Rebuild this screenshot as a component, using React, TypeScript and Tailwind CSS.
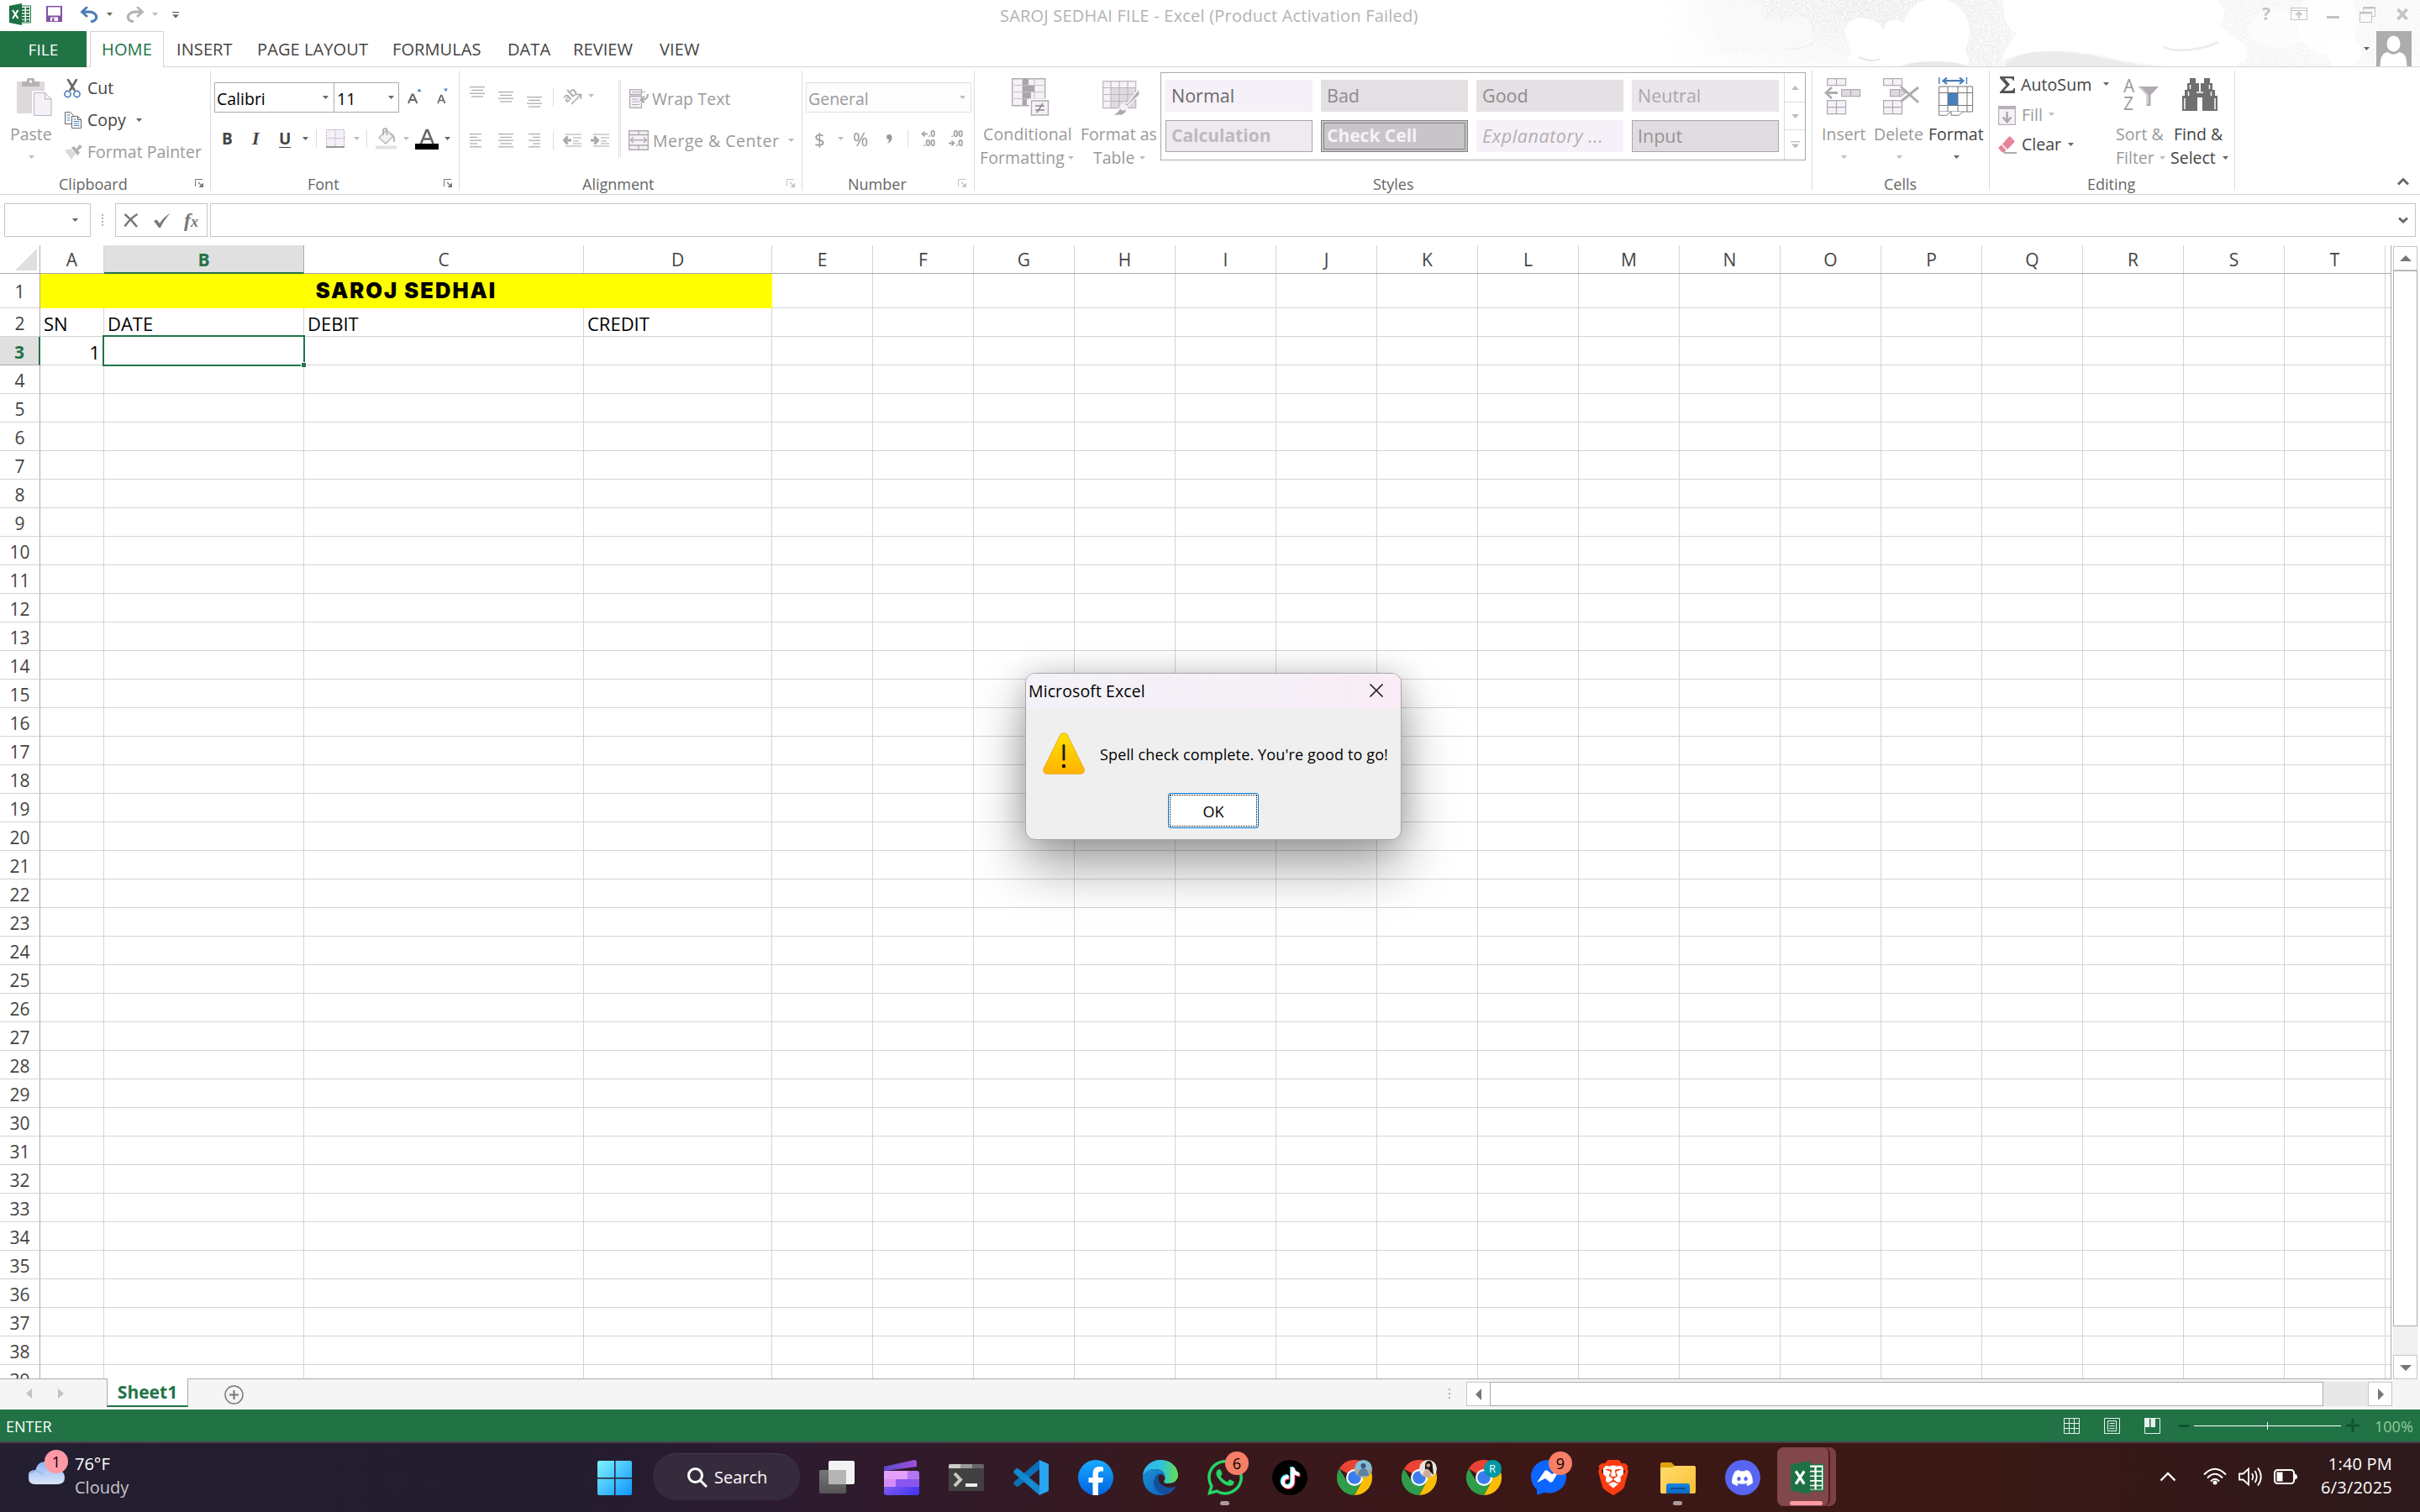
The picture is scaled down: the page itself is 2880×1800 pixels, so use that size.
import React from 'react';
import { FaWhatsapp, FaTiktok, FaDiscord } from 'react-icons/fa6';
import { SiBrave } from 'react-icons/si';

const COLUMNS = [
  { id: 'A', w: 'w-[76px]' },
  { id: 'B', w: 'w-[238px]' },
  { id: 'C', w: 'w-[333px]' },
  { id: 'D', w: 'w-[224px]' },
  ...'EFGHIJKLMNOPQRST'.split('').map((id) => ({ id, w: 'w-[120px]' })),
];
const ROWS = Array.from({ length: 39 }, (_, i) => i + 1);
const CELLS: Record<string, string> = { A2: 'SN', B2: 'DATE', C2: 'DEBIT', D2: 'CREDIT', A3: '1' };

function Caret({ className = '', dim = false }: { className?: string; dim?: boolean }) {
  return (
    <svg className={`h-[4px] w-[7px] shrink-0 ${className}`} viewBox="0 0 7 4">
      <path d="M0 0h7L3.5 4z" fill={dim ? '#bdbdbd' : '#666'} />
    </svg>
  );
}

function Launcher({ dim = false }: { dim?: boolean }) {
  const c = dim ? '#c4c4c4' : '#777';
  return (
    <svg className="h-[11px] w-[11px] shrink-0" viewBox="0 0 11 11">
      <path d="M.5 9V.5H9" fill="none" stroke={c} />
      <path d="M4 4l4 4" stroke={c} strokeWidth="1.3" />
      <path d="M10 4.5V10H4.5z" fill={c} />
    </svg>
  );
}

function Group({ width, label, labelPad, launcher, launcherGap = '', children }: {
  width: string; label: string; labelPad: string; launcher?: 'on' | 'dim'; launcherGap?: string; children: React.ReactNode;
}) {
  return (
    <section className={`flex h-[151px] shrink-0 ${width}`}>
      <div className="flex min-w-0 grow flex-col">
        <div className="flex h-[126px]">{children}</div>
        <div className={`flex h-[25px] items-center text-[18px] leading-none text-[#666] ${labelPad}`}>
          <span className="whitespace-nowrap">{label}</span>
          {launcher && <span className={launcherGap}><Launcher dim={launcher === 'dim'} /></span>}
        </div>
      </div>
      <div className="my-1 w-px bg-[#dcdcdc]" />
    </section>
  );
}

function Sep({ className = '' }: { className?: string }) {
  return <div className={`h-[22px] w-px shrink-0 bg-[#dcdcdc] ${className}`} />;
}

function Lines({ rows, className = '' }: { rows: [number, number][]; className?: string }) {
  return (
    <svg className={`h-[17px] w-[18px] shrink-0 ${className}`} viewBox="0 0 18 17">
      {rows.map(([x, w], i) => (
        <rect key={i} x={x} y={i * 3.8} width={w} height="1.2" fill="#a9a9a9" />
      ))}
    </svg>
  );
}

function ExcelIcon({ className = '' }: { className?: string }) {
  return (
    <svg className={className} viewBox="0 0 26 26">
      <path d="M14 3h11.5v20H14z" fill="#fff" stroke="#217346" strokeWidth="1" />
      <path d="M15 5h3.5v2.6H15zM20 5h4v2.6h-4zM15 8.7h3.5v2.6H15zM20 8.7h4v2.6h-4zM15 12.4h3.5V15H15zM20 12.4h4V15h-4zM15 16.1h3.5v2.6H15zM20 16.1h4v2.6h-4zM15 19.7h3.5V22H15zM20 19.7h4V22h-4z" fill="#217346" />
      <path d="M0 3l15-3v26L0 23z" fill="#1e7145" />
      <path d="M4 8l6.500 10M10.500 8L4 18" stroke="#fff" strokeWidth="2.100" fill="none" />
    </svg>
  );
}

function HeaderArt() {
  return (
    <svg className="absolute right-0 top-0 h-[79px] w-[900px]" viewBox="1980 0 900 79">
      <defs>
        <linearGradient id="artBase" x1="0" x2="1">
          <stop offset="0" stopColor="#fff" />
          <stop offset=".14" stopColor="#efefef" />
          <stop offset=".3" stopColor="#ebebeb" />
          <stop offset=".48" stopColor="#f1f1f1" />
          <stop offset=".7" stopColor="#f4f4f4" />
          <stop offset="1" stopColor="#f7f7f7" />
        </linearGradient>
        <filter id="grain" x="0" y="0" width="1" height="1">
          <feTurbulence type="fractalNoise" baseFrequency=".45" numOctaves="2" seed="4" />
          <feColorMatrix values="0 0 0 0 1  0 0 0 0 1  0 0 0 0 1  2.4 0 0 0 -.85" />
        </filter>
        <linearGradient id="fadeDown" x2="0" y2="1">
          <stop offset=".3" stopColor="#fff" stopOpacity="0" />
          <stop offset="1" stopColor="#fff" stopOpacity=".7" />
        </linearGradient>
      </defs>
      <rect x="1980" width="900" height="79" fill="url(#artBase)" />
      <rect x="1980" width="340" height="79" fill="url(#fadeDown)" />
      <rect x="1980" width="900" height="79" filter="url(#grain)" />
      <g fill="#f9f9f9">
        <path d="M2040 42C2032 10 2060 0 2075 0C2090 0 2102 14 2101 26C2106 17 2117 18 2120 26C2130 14 2158 18 2157 38C2157 50 2150 58 2162 53C2155 68 2130 68 2110 64C2080 58 2060 60 2042 64C2060 58 2043 50 2040 42z" />
      </g>
      <path d="M2125 58C2140 60 2150 55 2158 51" stroke="#e9e9e9" fill="none" />
      <g fill="#fff">
        <path d="M2196 40C2195 22 2215 16 2232 26C2240 31 2242 38 2243 33C2246 20 2262 22 2266 30C2268 8 2290 -4 2308 -2C2332 0 2345 22 2344 40C2343 52 2336 60 2342 66C2344 74 2342 79 2336 79H2270C2245 74 2215 78 2190 68C2215 72 2200 60 2196 40z" />
        <path d="M2384 0C2382 22 2390 34 2400 40C2390 52 2384 64 2382 74C2400 60 2450 56 2500 66C2540 76 2570 79 2620 79H2660C2700 60 2650 40 2640 30C2655 15 2640 0 2640 0z" />
        <ellipse cx="2770" cy="26" rx="36" ry="40" opacity=".8" />
        <ellipse cx="2790" cy="62" rx="20" ry="20" />
        <ellipse cx="2710" cy="35" rx="35" ry="22" opacity=".6" />
      </g>
      <path d="M2212 68C2222 73 2232 73 2237 70" stroke="#e6e6e6" fill="none" strokeWidth="2" />
      <path d="M2262 79C2280 71 2325 71 2342 79z" fill="#e8e8e8" />
      <path d="M2386 79C2390 62 2440 56 2490 66C2525 74 2540 77 2565 79z" fill="#ebebeb" />
      <path d="M2575 56C2590 63 2620 60 2640 50" stroke="#ececec" fill="none" strokeWidth="3" />
    </svg>
  );
}

function TitleBar() {
  return (
    <div className="relative flex h-[37px] items-start">
      <ExcelIcon className="ml-[11px] mt-1 h-[26px] w-[26px]" />
      <svg className="ml-[18px] mt-[7px] h-[19px] w-[19px]" viewBox="0 0 19 19">
        <path d="M0 0h19v19H0z" fill="#8552a8" />
        <path d="M2 1.500h15v10H2zM5 13.500h9V18H5z" fill="#fff" />
        <path d="M7 14.500h2.500V18H7z" fill="#8552a8" />
      </svg>
      <svg className="ml-[21px] mt-[8px] h-[19px] w-[22px]" viewBox="0 0 22 19">
        <path d="M2 6.200h10c10 1 10 11 1 11.500" fill="none" stroke="#4a7ebb" strokeWidth="3.200" />
        <path d="M9 0L2.500 6.200L9 12" fill="none" stroke="#4a7ebb" strokeWidth="2.800" />
      </svg>
      <Caret className="ml-[10px] mt-[15px]" />
      <svg className="ml-[16px] mt-[8px] h-[19px] w-[22px] -scale-x-100" viewBox="0 0 22 19">
        <path d="M2 6.200h10c10 1 10 11 1 11.500" fill="none" stroke="#b4b4b4" strokeWidth="3.200" />
        <path d="M9 0L2.500 6.200L9 12" fill="none" stroke="#b4b4b4" strokeWidth="2.800" />
      </svg>
      <Caret dim className="ml-[9px] mt-[15px]" />
      <svg className="ml-[17px] mt-[14px] h-[8px] w-[8px]" viewBox="0 0 8 8">
        <path d="M0 0h8v1.200H0zM0 3.500h8L4 7.500z" fill="#666" />
      </svg>
      <div className="ml-[977px] mt-[5px] w-[501px] whitespace-nowrap text-[20px] leading-[28px] tracking-[0.21px] text-[#b3b3b3]">
        SAROJ SEDHAI FILE - Excel (Product Activation Failed)
      </div>
      <div className="ml-[1001px] mt-[2px] w-[20px] text-[21px] font-bold leading-[28px] text-[#c3c3c3]">?</div>
      <svg className="ml-[14px] mt-[9px] h-[15px] w-[20px]" viewBox="0 0 20 15" fill="none" stroke="#c3c3c3">
        <path d="M.5 .5h19v14H.5zM.5 3.500h19" />
        <path d="M10 13V6M6.500 9L10 5.500L13.500 9" strokeWidth="1.800" />
      </svg>
      <div className="ml-[23px] mt-[19px] h-[3px] w-[15px] bg-[#c3c3c3]" />
      <svg className="ml-[24px] mt-[8px] h-[19px] w-[19px]" viewBox="0 0 19 19" fill="none" stroke="#c3c3c3">
        <path d="M4.500 6V.5h14v11H15" /><path d="M4 1.500h15" strokeWidth="2" />
        <path d="M.5 6.500h14v12H.5z" /><path d="M0 7.500h15" strokeWidth="2" />
      </svg>
      <svg className="ml-[25px] mt-[10px] h-[14px] w-[14px]" viewBox="0 0 14 14">
        <path d="M1.500 1l11 12M12.500 1l-11 12" stroke="#c3c3c3" strokeWidth="3.600" />
      </svg>
    </div>
  );
}

const TABS = [
  { t: 'INSERT', c: 'ml-[15px] w-[96px]' },
  { t: 'PAGE LAYOUT', c: 'w-[161px]' },
  { t: 'FORMULAS', c: 'w-[137px]' },
  { t: 'DATA', c: 'w-[78px]' },
  { t: 'REVIEW', c: 'w-[103px]' },
  { t: 'VIEW', c: 'w-[60px]' },
];

function TabBar() {
  return (
    <div className="relative flex h-[43px] text-[20px] tracking-[0.1px] text-[#444]">
      <div className="flex w-[103px] items-center justify-center bg-[#217346] text-[19px] text-white"><span className="pt-px">FILE</span></div>
      <div className="w-[4px] border-b border-[#d5d5d5]" />
      <div className="flex w-[88px] items-center justify-center border-x border-t border-[#d5d5d5] bg-white text-[#217346]"><span>HOME</span></div>
      <div className="flex grow border-b border-[#d5d5d5]">
        {TABS.map((x) => (
          <div key={x.t} className={`flex items-center whitespace-nowrap pt-[2px] ${x.c}`}>{x.t}</div>
        ))}
        <div className="ml-auto flex items-start">
          <Caret className="mr-[8px] mt-[19px]" />
          <svg className="mr-[10px] h-[42px] w-[42px]" viewBox="0 0 42 42">
            <path d="M0 0h42v42H0z" fill="#adadad" />
            <ellipse cx="20.500" cy="15" rx="8" ry="9.500" fill="#fff" />
            <path d="M4.500 42C5 30 7 26 14 25c4 3.500 9 3.500 13 0c7 1 9 5 9.500 17z" fill="#fff" />
          </svg>
        </div>
      </div>
    </div>
  );
}

function ClipboardGroup() {
  return (
    <Group width="w-[251px]" label="Clipboard" labelPad="pl-[70px]" launcher="on" launcherGap="ml-auto mr-[7px]">
      <div className="flex w-[76px] flex-col pt-[13px]">
        <svg className="ml-[20px] h-[46px] w-[42px]" viewBox="0 0 42 46">
          <rect x="0" y="4" width="33" height="38" rx="1.500" fill="#dcd8dc" />
          <path d="M6 4h6V1.500Q12 0 14 0h5q2 0 2 1.500V4h6v6H6z" fill="#b5b1b5" />
          <circle cx="16.500" cy="4" r="1.700" fill="#fff" />
          <path d="M19.500 17H34l7.500 7.500V45h-22z" fill="#f6f1f8" stroke="#fff" strokeWidth="3" />
          <path d="M20.500 17.500H33.500l7.500 7.500V44.500h-20.500zM33.500 17.500V25H41" fill="#f6f1f8" stroke="#b5b1b5" />
        </svg>
        <div className="ml-[12px] mt-[7px] h-[28px] leading-[28px] text-[#9a9a9a]">Paste</div>
        <Caret dim className="ml-[34px] mt-[11px]" />
      </div>
      <div className="flex flex-col pt-[6px]">
        <div className="flex h-[38px] items-center">
          <svg className="h-[23px] w-[20px]" viewBox="0 0 20 23" fill="none">
            <path d="M4.500 0L13 14M15.500 0L7 14" stroke="#666" strokeWidth="2.600" />
            <circle cx="4.500" cy="18" r="3.600" stroke="#4a7ebb" strokeWidth="1.600" /><circle cx="15.500" cy="18" r="3.600" stroke="#4a7ebb" strokeWidth="1.600" />
          </svg>
          <span className="ml-[8px]">Cut</span>
        </div>
        <div className="flex h-[38px] items-center">
          <svg className="ml-px h-[20px] w-[20px]" viewBox="0 0 20 20" fill="#fff" stroke="#666">
            <path d="M.5 .5h6l4 4v10H.5z" /><path d="M2.500 4h4M2.500 7h4M2.500 10h4" stroke="#4a7ebb" />
            <path d="M8.500 5.500h7l4 4v10h-11zM15.500 5.500v4h4" /><path d="M10.500 11.500h7M10.500 14h7M10.500 16.500h7M10.500 9h3" stroke="#4a7ebb" />
          </svg>
          <span className="ml-[7px] w-[58px]">Copy</span>
          <Caret />
        </div>
        <div className="flex h-[38px] items-center text-[#9a9a9a]">
          <svg className="ml-px h-[18px] w-[21px]" viewBox="0 0 21 18">
            <path d="M0 7l7-2l6 6l-5 7z" fill="#dcd8dc" />
            <path d="M8 4l3-2l3 3l4-5l3 3l-5 4l2 3l-3 3z" fill="#b5b1b5" />
          </svg>
          <span className="ml-[6px] whitespace-nowrap">Format Painter</span>
        </div>
      </div>
    </Group>
  );
}

function FontGroup() {
  return (
    <Group width="w-[296px]" label="Font" labelPad="pl-[115px]" launcher="on" launcherGap="ml-auto mr-[7px]">
      <div className="flex w-full flex-col pl-[4px] pt-[18px]">
        <div className="flex h-[36px]">
          <div className="flex w-[143px] items-center border border-[#ababab] pl-[2px] pr-[6px] text-black"><span className="pt-[3px]">Calibri</span><Caret className="ml-auto" /></div>
          <div className="-ml-px flex w-[78px] items-center border border-[#ababab] pl-[3px] pr-[5px] text-black"><span className="pt-[3px]">11</span><Caret className="ml-auto" /></div>
          <svg className="ml-[10px] mt-[6px] h-[20px] w-[18px]" viewBox="0 0 18 20">
            <path d="M1 19L5.500 8.500h1.300L11.300 19M2.800 15h6.700" fill="none" stroke="#666" strokeWidth="2" />
            <path d="M11.500 5h5l-2.500-3.500z" fill="#4a7ebb" />
          </svg>
          <svg className="ml-[17px] mt-[6px] h-[20px] w-[18px]" viewBox="0 0 18 20">
            <path d="M1 19L4.700 9.500h1L9.500 19M2.500 15.500h5.500" fill="none" stroke="#666" strokeWidth="1.700" />
            <path d="M8 1.500h5L10.500 5z" fill="#4a7ebb" />
          </svg>
        </div>
        <div className="mt-[16px] flex h-[30px] items-center">
          <span className="ml-[9px] w-[36px] text-[19px] font-bold">B</span>
          <span className="w-[32px] font-['Liberation_Serif'] text-[22px] font-bold italic">I</span>
          <span className="w-[28px] text-[19px] font-bold underline underline-offset-[3px]">U</span>
          <Caret />
          <Sep className="ml-[9px]" />
          <svg className="ml-[11px] h-[22px] w-[22px]" viewBox="0 0 22 22">
            <path d="M0 0h22v22H0z" fill="#f6f1f8" />
            <path d="M.5 20V.5h21V20M11 0v20M0 10.500h22" fill="none" stroke="#a8a3a8" strokeDasharray="1.500 1.500" />
            <path d="M0 21h22" stroke="#9a959a" strokeWidth="2" />
          </svg>
          <Caret dim className="ml-[11px]" />
          <Sep className="ml-[8px]" />
          <svg className="ml-[10px] h-[26px] w-[25px]" viewBox="0 0 25 26">
            <path d="M4 12L13 3l8 7l-9 9z" fill="#f6f1f8" stroke="#b5b1b5" strokeWidth="1.300" />
            <path d="M9 9V2.500q2-3 4.500 0V9M17 7q6 2 5 10" fill="none" stroke="#b5b1b5" strokeWidth="2" />
            <path d="M0 21.500h25v4H0z" fill="#e4dfe5" />
          </svg>
          <Caret dim className="ml-[8px]" />
          <svg className="ml-[7px] h-[26px] w-[28px]" viewBox="0 0 28 26">
            <path d="M7 19L13.500 3h1.500L21.500 19M9.500 13.500h9.500" fill="none" stroke="#666" strokeWidth="2.600" />
            <path d="M0 19h28v7H0z" fill="#000" />
          </svg>
          <Caret className="ml-[7px]" />
        </div>
      </div>
    </Group>
  );
}

const FULL: [number, number][] = [[0, 18], [2, 14], [0, 18], [2, 14]];

function AlignmentGroup() {
  return (
    <Group width="w-[408px]" label="Alignment" labelPad="pl-[146px]" launcher="dim" launcherGap="ml-auto mr-[7px]">
      <div className="flex w-[189px] flex-col pl-[12px]">
        <div className="mt-[23px] flex h-[24px]">
          <Lines rows={FULL} />
          <Lines className="ml-[16px] mt-[6px]" rows={FULL} />
          <Lines className="ml-[16px] mt-[12px]" rows={FULL} />
          <Sep className="ml-[13px] mt-[2px]" />
          <svg className="ml-[12px] mt-[2px] h-[20px] w-[22px] overflow-visible" viewBox="0 0 22 20">
            <text x="-1" y="14" transform="rotate(-42 6 10)" fontSize="15" fontWeight="600" fontFamily="Open Sans" fill="#a9a9a9">ab</text>
            <path d="M9 19L20 8M15 7.500h5.500V13" stroke="#a9a9a9" strokeWidth="1.500" fill="none" />
          </svg>
          <Caret dim className="ml-[7px] mt-[9px]" />
        </div>
        <div className="mt-[28px] flex h-[24px] items-center">
          <Lines rows={[[0, 14], [0, 9], [0, 14], [0, 9], [0, 14]]} />
          <Lines className="ml-[16px]" rows={[[0, 18], [2, 14], [0, 18], [2, 14], [0, 18]]} />
          <Lines className="ml-[16px]" rows={[[2, 14], [7, 9], [2, 14], [7, 9], [2, 14]]} />
          <Sep className="ml-[13px]" />
          <svg className="ml-[11px] h-[16px] w-[22px]" viewBox="0 0 22 16">
            <path d="M3 1h19M12 5h10M12 9h7M12 12h10M3 15h19" stroke="#a9a9a9" strokeWidth="1.200" />
            <path d="M10 8H2M5.500 3.500L1.500 8l4 4.500" stroke="#a9a9a9" strokeWidth="3" fill="none" />
          </svg>
          <svg className="ml-[11px] h-[16px] w-[22px]" viewBox="0 0 22 16">
            <path d="M3 1h19M12 5h10M12 9h7M12 12h10M3 15h19" stroke="#a9a9a9" strokeWidth="1.200" />
            <path d="M0 8H8M4 3.500L8.500 8l-4 4.500" stroke="#a9a9a9" strokeWidth="3" fill="none" />
          </svg>
        </div>
      </div>
      <div className="mt-[15px] h-[92px] w-[3px] border-x border-[#dcdcdc]" />
      <div className="flex flex-col pl-[9px] text-[#9a9a9a]">
        <div className="mt-[19px] flex h-[36px] items-center">
          <svg className="h-[23px] w-[24px]" viewBox="0 0 24 23" fill="none" stroke="#b0abb0">
            <path d="M1.500 .5h14v6h-14zM1.500 8.500h14v14h-14z" fill="#f6f1f8" strokeWidth="1.300" />
            <path d="M4 3.500h16M4 12h7M4 15h9M4 18.500h9" /><path d="M23 6q0 7-8 7M19 8.500L14.500 13l4.500 3" strokeWidth="2.200" />
          </svg>
          <span className="ml-[4px] whitespace-nowrap pt-[2px] tracking-[0.1px]">Wrap Text</span>
        </div>
        <div className="mt-[14px] flex h-[36px] items-center">
          <svg className="h-[24px] w-[24px]" viewBox="0 0 24 24" fill="#f6f1f8" stroke="#b0abb0" strokeWidth="1.400">
            <path d="M.7 .7h22.600v22.600H.7zM.7 5.500h22.600M.7 18h22.600M12 .7v4.800M12 18v5" />
            <path d="M3 11.800h18M6 8.500L2.500 11.800L6 15M18 8.500l3.500 3.300L18 15" fill="none" />
          </svg>
          <span className="ml-[5px] w-[161px] whitespace-nowrap pt-[2px] tracking-[0.5px]">Merge &amp; Center</span>
          <Caret dim />
        </div>
      </div>
    </Group>
  );
}

function DecimalIcon({ flip = false, className = '' }: { flip?: boolean; className?: string }) {
  return (
    <div className={`flex h-[20px] w-[19px] flex-col justify-between text-[10px] font-bold leading-[9px] text-[#9a9a9a] ${className}`}>
      <div className="flex items-center justify-end">
        {!flip && <svg className="h-[7px] w-[8px]" viewBox="0 0 8 7"><path d="M8 3.500H2M4.500 .5L1.500 3.500l3 3" stroke="#a9a9a9" strokeWidth="1.800" fill="none" /></svg>}
        <span>{flip ? '.00' : '.0'}</span>
      </div>
      <div className="flex items-center justify-end">
        {flip && <svg className="h-[7px] w-[8px]" viewBox="0 0 8 7"><path d="M0 3.500h6M3.500 .5L6.500 3.500l-3 3" stroke="#a9a9a9" strokeWidth="1.800" fill="none" /></svg>}
        <span>{flip ? '.0' : '.00'}</span>
      </div>
    </div>
  );
}

function NumberGroup() {
  return (
    <Group width="w-[205px]" label="Number" labelPad="pl-[54px]" launcher="dim" launcherGap="ml-auto mr-[8px]">
      <div className="flex flex-col pl-[4px] pt-[18px] text-[#9a9a9a]">
        <div className="flex h-[36px] w-[197px] items-center border border-[#e1e1e1] bg-[#fdfdfd] pl-[2px] pr-[6px]">
          <span className="pt-[3px]">General</span><Caret dim className="ml-auto" />
        </div>
        <div className="mt-[16px] flex h-[30px] items-center">
          <span className="ml-[10px] w-[28px] text-[22px]">$</span>
          <Caret dim />
          <span className="ml-[11px] w-[39px] text-[22px]">%</span>
          <svg className="h-[11px] w-[8px]" viewBox="0 0 8 11"><path d="M1 3q0-3 3.200-3T7.500 3.500Q7.500 9 2 11Q4.500 8 4 6.300Q1 6 1 3z" fill="#999" /></svg>
          <Sep className="ml-[18px]" />
          <DecimalIcon className="ml-[13px]" />
          <DecimalIcon flip className="ml-[14px]" />
        </div>
      </div>
    </Group>
  );
}

function StylesGroup() {
  const row1 = [
    { t: 'Normal', c: 'bg-[#f6f1f8] text-[#6a6a6a]' },
    { t: 'Bad', c: 'bg-[#e3dfe3] text-[#8e8b8e]' },
    { t: 'Good', c: 'bg-[#e4e0e4] text-[#8e8b8e]' },
    { t: 'Neutral', c: 'bg-[#ebe6ec] text-[#aaa7aa]' },
  ];
  const row2 = [
    { t: 'Calculation', c: 'bg-[#efeaf0] text-[#bdb9bd] font-bold border border-[#a9a6a9] pl-[6px] text-[21px]' },
    { t: 'Check Cell', c: 'bg-[#c8c5c9] text-[#f6f1f8] font-bold border-4 border-double border-[#868386] pl-[3px] text-[21px]' },
    { t: 'Explanatory ...', c: 'bg-[#f6f1f8] text-[#b3afb3] italic pl-[7px] tracking-[0.6px]' },
    { t: 'Input', c: 'bg-[#e0dce0] text-[#979497] border border-[#a9a6a9] pl-[6px]' },
  ];
  return (
    <Group width="w-[997px]" label="Styles" labelPad="pl-[474px]">
      <div className="flex w-[118px] flex-col pt-[13px] text-[#9a9a9a]">
        <svg className="ml-[44px] h-[45px] w-[45px]" viewBox="0 0 45 45">
          <path d="M.7 .7h39v32H.7z" fill="#f6f1f8" stroke="#b0abb0" strokeWidth="1.400" />
          <path d="M0 8.500h40M0 16.500h40M0 24.500h40M13 0v33M27 0v33" stroke="#c9c4ca" strokeWidth="1.200" />
          <path d="M13 1h7v7h-7zM13 9h14v7H13zM13 17h10v7H13zM13 25h5v7h-5z" fill="#aaa5aa" />
          <path d="M22.500 26h21v18h-21z" fill="#fff" stroke="#fff" strokeWidth="3" />
          <path d="M23.500 27h20v17h-20z" fill="#f6f1f8" stroke="#b0abb0" strokeWidth="1.400" />
          <path d="M28 33h11M28 38h11M37 30l-7 11" stroke="#8a868a" strokeWidth="1.500" />
        </svg>
        <div className="ml-[10px] mt-[8px] h-[28px] whitespace-nowrap leading-[28px] tracking-[0.15px]">Conditional</div>
        <div className="ml-[6px] flex h-[28px] items-center whitespace-nowrap tracking-[0.1px]"><span className="w-[108px]">Formatting</span><Caret dim /></div>
      </div>
      <div className="flex w-[103px] flex-col pt-[13px] text-[#9a9a9a]">
        <svg className="ml-[34px] h-[45px] w-[45px]" viewBox="0 0 45 45">
          <path d="M.7 3.700h39v32H.7z" fill="#f6f1f8" />
          <path d="M10 12h30v24H10z" fill="#dedade" />
          <path d="M.7 3.700h39v32H.7zM0 11.500h40M0 19.500h40M0 27.500h40M10 3v33M20 3v33M30 3v33" fill="none" stroke="#bcb7bd" strokeWidth="1.200" />
          <path d="M44 12L30 30Q24 28 21 35Q18 42 10 44.500H22Q30 42 29 34L44 20z" fill="#b0abb0" stroke="#fff" strokeWidth="1.300" />
          <circle cx="25" cy="34.500" r="4" fill="#f6f1f8" />
        </svg>
        <div className="ml-[8px] mt-[8px] h-[28px] whitespace-nowrap leading-[28px]">Format as</div>
        <div className="ml-[23px] flex h-[28px] items-center"><span className="w-[55px]">Table</span><Caret dim /></div>
      </div>
      <div className="mt-[6px] flex h-[105px] w-[768px] border border-[#ababab] text-[21.500px]">
        <div className="flex w-[741px] flex-col gap-[10px] pl-[5px] pt-[8px] leading-none">
          <div className="flex gap-[10px]">
            {row1.map((s) => <div key={s.t} className={`flex h-[38px] w-[175px] items-center pb-px pl-[7px] ${s.c}`}>{s.t}</div>)}
          </div>
          <div className="flex gap-[10px]">
            {row2.map((s) => <div key={s.t} className={`flex h-[38px] w-[175px] items-center whitespace-nowrap pb-px ${s.c}`}>{s.t}</div>)}
          </div>
        </div>
        <div className="flex grow flex-col border-l border-[#dcdcdc]">
          <div className="flex h-[35px] items-center justify-center border-b border-[#dcdcdc]"><svg className="h-[5px] w-[9px]" viewBox="0 0 9 5"><path d="M0 5h9L4.500 0z" fill="#bdbdbd" /></svg></div>
          <div className="flex h-[33px] items-center justify-center border-b border-[#dcdcdc]"><svg className="h-[5px] w-[9px]" viewBox="0 0 9 5"><path d="M0 0h9L4.500 5z" fill="#bdbdbd" /></svg></div>
          <div className="flex grow items-center justify-center"><svg className="h-[9px] w-[11px]" viewBox="0 0 11 9"><path d="M0 0h11v1.200H0zM1 3.500h9L5.500 8.500z" fill="#bdbdbd" /></svg></div>
        </div>
      </div>
    </Group>
  );
}

function CellsGroup() {
  return (
    <Group width="w-[211px]" label="Cells" labelPad="pl-[85px]">
      <div className="flex w-[74px] flex-col pt-[13px] text-[#9a9a9a]">
        <svg className="ml-[14px] h-[44px] w-[44px]" viewBox="0 0 44 44" stroke="#b0abb0" strokeWidth="1.200">
          <path d="M3.600 .6h22v8h-22zM14.500 .6v8M3.600 26.600h22v16h-22zM14.500 26.600v16M3.600 34.600h22" fill="#f6f1f8" />
          <path d="M20.600 13.600h22v8h-22zM31.500 13.600v8" fill="#dedade" />
          <path d="M16 17.500H3M9 11L2 17.500L9 24" fill="none" strokeWidth="2.800" />
        </svg>
        <div className="ml-[11px] mt-[9px] h-[28px] leading-[28px]">Insert</div>
        <Caret dim className="ml-[34px] mt-[11px]" />
      </div>
      <div className="flex w-[65px] flex-col pt-[13px] text-[#9a9a9a]">
        <svg className="ml-[10px] h-[44px] w-[44px]" viewBox="0 0 44 44" stroke="#b0abb0" strokeWidth="1.200">
          <path d="M.6 .6h22v8h-22zM11.500 .6v8M.6 26.600h22v16h-22zM11.500 26.600v16M.6 34.600h22" fill="#f6f1f8" />
          <path d="M8.600 13.600h13l5 4l-5 4h-13zM19.500 13.600v8" fill="#dedade" />
          <path d="M21 10l21 19M42 11L21 28" fill="none" strokeWidth="3" />
        </svg>
        <div className="-ml-px mt-[9px] h-[28px] leading-[28px]">Delete</div>
        <Caret dim className="ml-[26px] mt-[11px]" />
      </div>
      <div className="flex w-[70px] flex-col pt-[12px]">
        <svg className="ml-[11px] h-[46px] w-[42px]" viewBox="0 0 42 46">
          <path d="M.6 11h40v30H.6zM0 18.500h41M0 33.500h41M11 11v30M23 11v30M34 11v30" fill="#fff" stroke="#777" strokeWidth="1" />
          <path d="M11 19h12v14H11z" fill="#4a7ebb" />
          <path d="M.8 0v8M33.500 0v8" stroke="#4a7ebb" strokeWidth="1.400" />
          <path d="M5 4.200h25M10 .5L5.500 4.200L10 8M25 .5l4.500 3.700L25 8" stroke="#4a7ebb" strokeWidth="2.200" fill="none" />
          <path d="M.6 41v4.300h9l5-4.300M15 41v4.300h9l5-4.300" fill="#fff" stroke="#777" />
        </svg>
        <div className="-ml-px mt-[8px] h-[28px] leading-[28px]">Format</div>
        <Caret className="ml-[29px] mt-[11px]" />
      </div>
    </Group>
  );
}

function EditingGroup() {
  return (
    <Group width="w-[292px]" label="Editing" labelPad="pl-[116px]">
      <div className="flex w-[151px] flex-col pl-[10px] pt-[2px]">
        <div className="flex h-[38px] items-center">
          <svg className="ml-[2px] h-[20px] w-[18px]" viewBox="0 0 18 20"><path d="M0 0h17v5h-1.300q-.5-2.800-3.700-2.800H5.500L12 9.500L5 17H12.500Q16 17 16.500 14H18v6H0v-1.500L7.500 10.500L0 2z" fill="#555" /></svg>
          <span className="ml-[7px] w-[98px] tracking-[0.1px]">AutoSum</span><Caret className="-mt-[3px]" />
        </div>
        <div className="flex h-[34px] items-center text-[#9a9a9a]">
          <svg className="h-[23px] w-[21px]" viewBox="0 0 21 23"><path d="M.6 1h19.800v21.400H.6z" fill="#f6f1f8" stroke="#b5b1b5" strokeWidth="1.200" /><path d="M0 0h21v4H0z" fill="#b5b1b5" /><path d="M10.500 7v12M5.500 13.500l5 5.500l5-5.500" fill="none" stroke="#aaa" strokeWidth="2.600" /></svg>
          <span className="ml-[7px] w-[32px]">Fill</span><Caret dim className="-mt-[2px]" />
        </div>
        <div className="flex h-[36px] items-center">
          <svg className="h-[21px] w-[22px]" viewBox="0 0 22 21"><path d="M13 .5Q14 0 15 1l4 4.500q.7 1 0 2l-8 8.500l-6-6.500z" fill="#e7849a" /><path d="M4 10.500l5.500 6.500L7 19.500H5L.5 15v-1.500z" fill="#e7849a" /><path d="M7 20h15" stroke="#777" strokeWidth="1.200" /></svg>
          <span className="ml-[6px] w-[55px]">Clear</span><Caret />
        </div>
      </div>
      <div className="flex w-[64px] flex-col pt-[12px] text-[#9a9a9a]">
        <div className="ml-[8px] flex h-[45px]">
          <div className="w-[18px] text-[21px] leading-[21px]"><div>A</div><div>Z</div></div>
          <svg className="mt-[11px] h-[23px] w-[24px]" viewBox="0 0 24 23"><path d="M0 0h24L14.500 10v13H9.500V10z" fill="#b0abb0" /><path d="M3 1.500l8 8.500v11" stroke="#f6f1f8" fill="none" /></svg>
        </div>
        <div className="-ml-px mt-[9px] h-[28px] whitespace-nowrap leading-[28px]">Sort &amp;</div>
        <div className="-ml-px flex h-[28px] items-center"><span className="w-[52px]">Filter</span><Caret dim /></div>
      </div>
      <div className="flex w-[76px] flex-col pt-[13px]">
        <svg className="ml-[14px] h-[40px] w-[42px]" viewBox="0 0 42 40">
          <path d="M9 0h7v6h4v10h2V6h4V0h7v6h3v8h3v7h3v18H24V23h-6v16H0V21h3v-7h3V6h3z" fill="#707070" />
          <path d="M3 24v13M7.500 16v5M9.500 8v5M39 24v13M34.500 16v5M32.500 8v5M17 17h8" stroke="#fff" strokeWidth="1.500" />
        </svg>
        <div className="ml-[4px] mt-[13px] h-[28px] whitespace-nowrap leading-[28px]">Find &amp;</div>
        <div className="flex h-[28px] items-center"><span className="w-[62px]">Select</span><Caret /></div>
      </div>
    </Group>
  );
}

function Ribbon() {
  return (
    <div className="flex h-[152px] border-b border-[#d5d5d5] text-[19.500px] leading-none text-[#444]">
      <ClipboardGroup />
      <FontGroup />
      <AlignmentGroup />
      <NumberGroup />
      <StylesGroup />
      <CellsGroup />
      <EditingGroup />
      <div className="flex grow items-end justify-end pb-[10px] pr-[13px]">
        <svg className="h-[10px] w-[14px]" viewBox="0 0 14 10"><path d="M1 8.500L7 2.500l6 6" fill="none" stroke="#666" strokeWidth="2.800" /></svg>
      </div>
    </div>
  );
}

function FormulaBar() {
  return (
    <div className="flex h-[60px] pl-[5px] pt-[10px]">
      <div className="flex h-[40px] w-[103px] items-center justify-end border border-[#c6c6c6] pr-[14px]"><Caret /></div>
      <div className="ml-[13px] flex h-[40px] w-[2px] flex-col justify-center gap-[2px]">
        {[0, 1, 2, 3].map((i) => <div key={i} className="h-[2px] w-[2px] bg-[#b0b0b0]" />)}
      </div>
      <div className="ml-[14px] flex h-[40px] w-[110px] items-center border border-[#c6c6c6] pl-[9px]">
        <svg className="h-[17px] w-[18px]" viewBox="0 0 18 17"><path d="M1.500 1Q9 7 16 16M16.500 1Q8 6 1.500 15.500" fill="none" stroke="#777" strokeWidth="2.500" /></svg>
        <svg className="ml-[18px] h-[17px] w-[20px]" viewBox="0 0 20 17"><path d="M0 9l3.500-1.500L7 12Q12 4 19.500 0Q12 8 8 17H6z" fill="#777" /></svg>
        <span className="ml-[16px] font-['Liberation_Serif'] text-[24px] font-bold italic leading-none text-[#777]">f<span className="text-[18px]">x</span></span>
      </div>
      <div className="ml-[3px] flex h-[40px] w-[2625px] items-center justify-end border border-[#c6c6c6] pr-[8px]">
        <svg className="h-[8px] w-[12px]" viewBox="0 0 12 8"><path d="M1 1.500L6 6l5-4.500" fill="none" stroke="#666" strokeWidth="2.800" /></svg>
      </div>
    </div>
  );
}

function Grid() {
  return (
    <div className="flex h-[1350px] w-[2846px] flex-col overflow-hidden border-b border-r border-[#ababab]">
      <div className="flex h-[34px] shrink-0 border-b border-[#ababab] text-[21px] leading-none text-[#444]">
        <div className="flex w-[48px] shrink-0 items-end justify-end border-r border-[#ababab] pb-[3px] pr-[3px]">
          <svg className="h-[26px] w-[26px]" viewBox="0 0 26 26"><path d="M26 0v26H0z" fill="#dfdfdf" /></svg>
        </div>
        {COLUMNS.map((c) => c.id === 'B' ? (
          <div key={c.id} className={`-mb-px flex shrink-0 items-center justify-center border-b-2 border-r border-b-[#217346] border-r-[#ababab] bg-[#e0e0e0] pt-[2px] font-bold text-[#217346] ${c.w}`}>{c.id}</div>
        ) : (
          <div key={c.id} className={`flex shrink-0 items-center justify-center border-r border-[#d4d4d4] pt-px ${c.w}`}>{c.id}</div>
        ))}
      </div>
      {ROWS.map((r) => (
        <div key={r} className={`flex shrink-0 text-[22px] leading-none ${r === 1 ? 'h-[41px]' : 'h-[34px]'}`}>
          <div className={`flex w-[48px] shrink-0 items-center justify-center border-b pt-[3px] text-[21px] ${r === 3 ? 'border-b-[#ababab] border-r-2 border-r-[#217346] bg-[#e0e0e0] font-bold text-[#217346]' : 'border-r border-b-[#d4d4d4] border-r-[#ababab] text-[#444]'}`}>{r}</div>
          {r === 1 && (
            <div className="flex w-[871px] shrink-0 items-center justify-center bg-[#ffff00] pb-px font-['Inter'] text-[25.500px] font-black tracking-[2px] text-black">SAROJ SEDHAI</div>
          )}
          {(r === 1 ? COLUMNS.slice(4) : COLUMNS).map((c) => (
            <div key={c.id} className={`relative flex shrink-0 items-center border-b border-r border-[#d4d4d4] px-[4px] pt-[3px] text-black ${c.id + r === 'A3' ? 'justify-end' : ''} ${c.w}`}>
              {CELLS[c.id + r]}
              {c.id + r === 'B3' && (
                <>
                  <div className="absolute -left-[2px] -top-[2px] z-10 h-[37px] w-[241px] border-2 border-[#217346]" />
                  <div className="absolute -bottom-[3px] -right-[3px] z-10 h-[6px] w-[6px] border-l border-t border-white bg-[#217346]" />
                </>
              )}
            </div>
          ))}
          <div className="grow border-b border-[#d4d4d4]" />
        </div>
      ))}
    </div>
  );
}

function ScrollArrow({ d, className = '' }: { d: string; className?: string }) {
  return (
    <div className={`flex shrink-0 items-center justify-center border border-[#c6c6c6] bg-white ${className}`}>
      <svg className="h-[14px] w-[14px]" viewBox="0 0 14 14"><path d={d} fill="#777" /></svg>
    </div>
  );
}

function SheetBar() {
  return (
    <div className="flex h-[36px] bg-[#f5f5f5]">
      <svg className="ml-[31px] mt-[11px] h-[12px] w-[7px]" viewBox="0 0 7 12"><path d="M7 0v12L0 6z" fill="#c3c3c3" /></svg>
      <svg className="ml-[31px] mt-[11px] h-[12px] w-[7px]" viewBox="0 0 7 12"><path d="M0 0v12l7-6z" fill="#c3c3c3" /></svg>
      <div className="relative z-10 -mt-px ml-[51px] flex h-[34px] w-[97px] items-center justify-center border-x border-b-2 border-x-[#ababab] border-b-[#217346] bg-white text-[21px] font-bold leading-none text-[#217346]">Sheet1</div>
      <svg className="ml-[43px] mt-[7px] h-[23px] w-[23px]" viewBox="0 0 23 23" fill="none" stroke="#777">
        <circle cx="11.500" cy="11.500" r="10.500" strokeWidth="1.400" /><path d="M6 11.500h11M11.500 6v11" strokeWidth="2" />
      </svg>
      <div className="ml-[1434px] mt-[11px] flex w-[2px] flex-col gap-[3px]">
        {[0, 1, 2].map((i) => <div key={i} className="h-[2px] w-[2px] bg-[#b0b0b0]" />)}
      </div>
      <div className="ml-[19px] mt-[3px] flex h-[29px] w-[1102px] bg-[#e8e8e8]">
        <ScrollArrow className="w-[29px]" d="M10 0v14L3 7z" />
        <div className="-ml-px w-[992px] border border-[#ababab] bg-white" />
        <ScrollArrow className="ml-auto w-[29px]" d="M4 0v14l7-7z" />
      </div>
    </div>
  );
}

function StatusBar() {
  return (
    <div className="flex h-[38px] items-center bg-[#217346] text-[18px] leading-none text-white">
      <span className="ml-[7px] pt-[2px]">ENTER</span>
      <svg className="ml-auto h-[19px] w-[19px]" viewBox="0 0 19 19" fill="none" stroke="#e8f1ec"><path d="M.5 .5h18v18H.5zM6.500 0v19M12.500 0v19M0 6.500h19M0 12.500h19" /></svg>
      <svg className="ml-[29px] h-[19px] w-[19px]" viewBox="0 0 19 19" fill="none" stroke="#e8f1ec"><path d="M.5 .5h18v18H.5zM4.500 3.500h10v12h-10zM6.500 6.500h6M6.500 9.500h6M6.500 12.500h6" /></svg>
      <svg className="ml-[29px] h-[19px] w-[19px]" viewBox="0 0 19 19"><path d="M.5 .5h18v18H.5z" fill="none" stroke="#e8f1ec" /><path d="M0 0h6v11H0zM7.500 0h5.500v11H7.500z" fill="#e8f1ec" /></svg>
      <div className="ml-[22px] h-[3px] w-[12px] bg-[#0f5530]" />
      <svg className="ml-[6px] h-[9px] w-[175px]" viewBox="0 0 175 9"><path d="M0 4.500h175M87.500 0v9" stroke="#fff" /></svg>
      <svg className="ml-[6px] h-[16px] w-[16px]" viewBox="0 0 16 16"><path d="M0 8h16M8 0v16" stroke="#0f5530" strokeWidth="3" /></svg>
      <span className="ml-[18px] w-[54px] pt-[2px] text-[#93ca98]">100%</span>
    </div>
  );
}

const IC = 'h-[42px] w-[42px]';

function ChromeIcon({ children }: { children?: React.ReactNode }) {
  return (
    <div className="relative">
      <svg className={IC} viewBox="0 0 42 42">
        <path d="M21 21L2.800 10.500A21 21 0 0 1 39.200 10.500z" fill="#ea4335" />
        <path d="M21 11H39.500A21 21 0 0 1 21 42L29.500 26z" fill="#fbbc05" />
        <path d="M12.500 26L2.800 10.500A21 21 0 0 0 21 42L29.500 26z" fill="#2f9e4a" />
        <circle cx="21" cy="21" r="10" fill="#fff" /><circle cx="21" cy="21" r="7.800" fill="#3b7ded" />
      </svg>
      <div className="absolute right-0 top-0 h-[21px] w-[21px] overflow-hidden rounded-full">{children}</div>
    </div>
  );
}

function Slot({ children, running = false }: { children: React.ReactNode; running?: boolean }) {
  return (
    <div className="relative flex h-full w-[77px] shrink-0 items-center justify-center">
      {children}
      {running && <div className="absolute bottom-[8px] h-[5px] w-[11px] rounded-full bg-[#ab9a9c]" />}
    </div>
  );
}

function Count({ n }: { n: string }) {
  return <div className="absolute right-[10px] top-[10px] flex h-[28px] w-[28px] items-center justify-center rounded-full bg-[#f67f66] text-[18px] leading-none text-black">{n}</div>;
}

function TaskbarApps() {
  return (
    <>
      <Slot>
        <svg className="h-[40px] w-[42px]" viewBox="0 0 42 40">
          <defs><linearGradient id="tv" x2="0" y2="1"><stop stopColor="#777" /><stop offset="1" stopColor="#555" /></linearGradient></defs>
          <rect y="11" width="32" height="28" rx="2" fill="url(#tv)" /><rect x="11" width="31" height="28" rx="2" fill="#f2f2f2" />
          <path d="M11 11h21v17H13q-2 0-2-2z" fill="#b5b5b5" />
        </svg>
      </Slot>
      <Slot>
        <svg className={IC} viewBox="0 0 42 42">
          <defs>
            <linearGradient id="cc1"><stop stopColor="#5b4ccc" /><stop offset="1" stopColor="#a04fd8" /></linearGradient>
            <linearGradient id="cc2" x2="1" y2=".3"><stop stopColor="#7f5cf0" /><stop offset="1" stopColor="#4a38f0" /></linearGradient>
          </defs>
          <path d="M0 8L36 0q3 0 3 3v5L2 13q-2 0-2-2z" fill="url(#cc1)" />
          <path d="M0 13h39q3 0 3 3v7H0z" fill="#b377f3" /><path d="M0 13h28v10H0z" fill="#e3a0fb" />
          <path d="M0 23h42v9H0z" fill="#8c55f0" /><path d="M0 23h14v9H0z" fill="#d68cf8" />
          <path d="M0 32h42v7q0 3-3 3H3q-3 0-3-3z" fill="url(#cc2)" />
        </svg>
      </Slot>
      <Slot>
        <svg className="h-[32px] w-[42px]" viewBox="0 0 42 32">
          <path d="M0 2q0-2 2-2h38q2 0 2 2v30H0z" fill="#414141" /><path d="M0 2q0-2 2-2h12v5H0z" fill="#ccc" /><path d="M14 0h14v5H14z" fill="#999" /><path d="M28 0h12q2 0 2 2v3H28z" fill="#666" />
          <path d="M7 11l7 7.500L7 26" fill="none" stroke="#c8c8c8" strokeWidth="4" /><path d="M20 23h14v4H20z" fill="#eee" />
        </svg>
      </Slot>
      <Slot>
        <svg className={IC} viewBox="0 0 42 42">
          <path d="M31 0v11L6 31.500Q4 32.500 2.500 31L.5 28.500Q0 27 1 26z" fill="#0b6fb8" />
          <path d="M31 42V31L6 10.500Q4 9.500 2.500 11L.5 13Q0 14.500 1 16z" fill="#1389cf" />
          <path d="M31 0l11 5v32l-11 5z" fill="#2aa5f3" />
        </svg>
      </Slot>
      <Slot>
        <svg className={IC} viewBox="0 0 42 42">
          <defs><linearGradient id="fb" x2="0" y2="1"><stop stopColor="#19aaff" /><stop offset="1" stopColor="#0163e0" /></linearGradient></defs>
          <circle cx="21" cy="21" r="21" fill="url(#fb)" />
          <path d="M17.500 42V27H12.500V21H17.500V17Q17.500 8 25 8q3 0 5 .500V13.500H27q-3 0-3 3.500V21H30L29 27H24V42z" fill="#fff" />
        </svg>
      </Slot>
      <Slot>
        <svg className={IC} viewBox="0 0 42 42">
          <defs>
            <linearGradient id="ed1"><stop stopColor="#2fb4ee" /><stop offset=".55" stopColor="#2fc3d8" /><stop offset="1" stopColor="#66e04d" /></linearGradient>
            <linearGradient id="ed2" x2="1" y2="1"><stop stopColor="#1b8fd8" /><stop offset="1" stopColor="#0a5fb8" /></linearGradient>
          </defs>
          <path d="M0 20C0 8 10 0 21 0C34 0 42 9 42 18C42 25 36 28 30 28C25 28 24 26 26 24C28 18 24 11 15 11C7 11 1 16 0 20z" fill="url(#ed1)" />
          <path d="M0 20C2 14 8 11 14 11C22 11 27 16 26 21C25 17 19 15 16 20C12 27 18 36 27 36C32 36 36 34 39 32C36 38 29 42 21 42C8 42 0 32 0 20z" fill="url(#ed2)" />
          <path d="M15 20C9 29 17 41 28 41C34 38 38 34 39.500 31C33 35 24 32 20 27C18 24 18 20 20 17C18 17 16 18 15 20z" fill="#134f9c" />
        </svg>
      </Slot>
      <Slot running><FaWhatsapp className="h-[48px] w-[48px] text-[#25d366]" /><Count n="6" /></Slot>
      <Slot>
        <div className="relative flex h-[42px] w-[42px] items-center justify-center rounded-full bg-black">
          <FaTiktok className="absolute left-[8px] top-[8px] h-[25px] w-[25px] text-[#25f4ee]" />
          <FaTiktok className="absolute left-[10px] top-[10px] h-[25px] w-[25px] text-[#fe2c55]" />
          <FaTiktok className="absolute left-[9px] top-[9px] h-[25px] w-[25px] text-white" />
        </div>
      </Slot>
      <Slot>
        <ChromeIcon>
          <svg className="h-[21px] w-[21px]" viewBox="0 0 21 21"><path d="M0 0h21v21H0z" fill="#7fbfd6" /><path d="M0 11h21v10H0z" fill="#a8a79c" /><circle cx="10.500" cy="7" r="3" fill="#47507a" /><path d="M4 19q1-9 6.500-9t6.500 9z" fill="#5b83a6" /></svg>
        </ChromeIcon>
      </Slot>
      <Slot>
        <ChromeIcon>
          <svg className="h-[21px] w-[21px]" viewBox="0 0 21 21"><path d="M0 0h21v21H0z" fill="#e9e4e0" /><path d="M7 12Q6 1 11.500 1Q16 1 16 9l1 9l-4-4z" fill="#17110f" /><circle cx="10.800" cy="6.500" r="2.300" fill="#c99a80" /><path d="M4 21q1-10 5-10.500T15 21z" fill="#d0ad99" /></svg>
        </ChromeIcon>
      </Slot>
      <Slot>
        <ChromeIcon><div className="flex h-full w-full items-center justify-center bg-[#0097a7] text-[13px] leading-none text-white">R</div></ChromeIcon>
      </Slot>
      <Slot>
        <svg className={IC} viewBox="0 0 42 42">
          <path d="M21 0C33 0 42 8.500 42 20C42 31.500 33 39.500 21 39.500q-3 0-6-.800L9 41.500q-2 .5-2-1.500V35.500Q0 29 0 20C0 8.500 9 0 21 0z" fill="#0a66ff" />
          <path d="M7 27L16 13.500q2-2 4-.500L25 17L34 12L26 25.500q-2 2-4 .500L17 22z" fill="#fff" />
        </svg>
        <Count n="9" />
      </Slot>
      <Slot>
        <div className="relative flex h-[42px] w-[42px] items-center justify-center">
          <div className="absolute left-[9px] top-[5px] h-[30px] w-[24px] rounded-b-[12px] rounded-t-[4px] bg-white" />
          <SiBrave className="relative h-[42px] w-[42px] text-[#fb3b12]" />
        </div>
      </Slot>
      <Slot running>
        <svg className="h-[37px] w-[42px]" viewBox="0 0 42 37">
          <defs>
            <linearGradient id="fo" x2="1" y2="1"><stop stopColor="#ffdc6c" /><stop offset="1" stopColor="#fcbf35" /></linearGradient>
            <linearGradient id="fo2" x2="0" y2="1"><stop stopColor="#1487dc" /><stop offset="1" stopColor="#0b68c0" /></linearGradient>
          </defs>
          <path d="M0 2q0-2 2-2h11l4 4v6H0z" fill="#e0a010" /><path d="M0 6h14l3-2h23q2 0 2 2v29q0 2-2 2H2q-2 0-2-2z" fill="url(#fo)" />
          <path d="M7 37V28q0-3 3-3h22q3 0 3 3v9z" fill="url(#fo2)" /><path d="M12 31h18" stroke="#0a4f98" strokeWidth="2" />
        </svg>
      </Slot>
      <Slot><div className="flex h-[42px] w-[42px] items-center justify-center rounded-full bg-[#5865f2]"><FaDiscord className="h-[27px] w-[27px] text-white" /></div></Slot>
      <div className="relative flex h-full w-[77px] items-center justify-center">
        <div className="absolute left-[3px] top-[5px] h-[70px] w-[70px] rounded-[8px] bg-[#7b4044]" />
        <div className="absolute left-[3px] top-[5px] h-[70px] w-[63px] rounded-[8px] border-r-2 border-[#4c1f22] bg-[#82474b]" />
        <ExcelIcon className="relative h-[40px] w-[40px]" />
        <div className="absolute bottom-[8px] left-[18px] h-[5px] w-[39px] rounded-full bg-[#ff99a4]" />
      </div>
    </>
  );
}

function Taskbar() {
  return (
    <div className="flex h-[84px] items-stretch border-t-2 border-[#4c3f49] bg-[linear-gradient(90deg,#241f30_0%,#231d2f_22%,#2c1b30_32%,#38191f_48%,#3c1716_62%,#3c1914_80%,#331819_92%,#2d1a1c_100%)] text-[20px] text-white">
      <div className="relative w-[89px]">
        <svg className="ml-[34px] mt-[20px] h-[30px] w-[43px]" viewBox="0 0 43 30">
          <defs><linearGradient id="cl" x2="0" y2="1"><stop stopColor="#8db4f2" /><stop offset="1" stopColor="#dbe6fa" /></linearGradient></defs>
          <path d="M8 14Q10 2 20 2Q30 2 33 12Q43 12 43 21Q43 29 34 29H8Q0 29 0 21.500Q0 14 8 14z" fill="url(#cl)" />
          <path d="M0 21Q0 13 8 13Q14 13 17 18" fill="none" stroke="#9dbdf0" strokeWidth="2" />
        </svg>
        <div className="absolute left-[53px] top-[8px] flex h-[28px] w-[28px] items-center justify-center rounded-full bg-[#ff99a4] text-[18px] leading-none text-black">1</div>
      </div>
      <div className="flex w-[604px] flex-col pt-[11px] leading-[28px]"><span>76°F</span><span className="text-[#c8c5cb]">Cloudy</span></div>
      <div className="flex w-[77px] items-center justify-center">
        <svg className="h-[41px] w-[41px]" viewBox="0 0 41 41">
          <defs><linearGradient id="win" x2="1" y2="1"><stop stopColor="#82f2ff" /><stop offset="1" stopColor="#0b95fb" /></linearGradient></defs>
          <path d="M2 0h18v20H0V2q0-2 2-2zM21.500 0H39q2 0 2 2v18H21.500zM0 21.500h20V41H2q-2 0-2-2zM21.500 21.500H41V39q0 2-2 2H21.500z" fill="url(#win)" />
        </svg>
      </div>
      <div className="ml-[7px] mt-[12px] flex h-[56px] w-[175px] items-center rounded-full border-t border-[#453a4c] bg-[#362b3d] pl-[41px]">
        <svg className="h-[24px] w-[24px]" viewBox="0 0 24 24" fill="none" stroke="#fff" strokeWidth="3"><circle cx="9.500" cy="9.500" r="8" /><path d="M15 15l8 8" /></svg>
        <span className="ml-[8px]">Search</span>
      </div>
      <div className="ml-[5px] flex"><TaskbarApps /></div>
      <svg className="ml-auto mt-[34px] h-[12px] w-[20px]" viewBox="0 0 20 12"><path d="M1.500 10.500L10 2l8.500 8.500" fill="none" stroke="#fff" strokeWidth="2.400" /></svg>
      <svg className="ml-[32px] mt-[29px] h-[21px] w-[28px]" viewBox="0 0 28 21" fill="none" stroke="#fff" strokeWidth="2">
        <path d="M1 8.500Q14-5 27 8.500M5 12.500Q14 3 23 12.500M9 16.500Q14 11 19 16.500" /><circle cx="14" cy="18" r="2.500" fill="#fff" stroke="none" />
      </svg>
      <svg className="ml-[14px] mt-[28px] h-[24px] w-[29px]" viewBox="0 0 29 24" fill="none" stroke="#fff" strokeWidth="1.800">
        <path d="M1 8.500h4.500L12 2.500v19L5.500 15.500H1zM16 8Q18.500 12 16 16M19.500 5Q24 12 19.500 19M23 1.500Q30.500 12 23 22.500" />
      </svg>
      <svg className="ml-[13px] mt-[31px] h-[18px] w-[28px]" viewBox="0 0 28 18"><rect x="1" y="1" width="23" height="16" rx="3.500" fill="none" stroke="#fff" strokeWidth="2" /><path d="M3.500 3.500h7v11h-7z" fill="#fff" /><path d="M25 5.500q3 1 3 3.500t-3 3.500z" fill="#fff" /></svg>
      <div className="flex w-[113px] flex-col items-end pt-[11px] leading-[28px]"><span className="tracking-[0.2px]">1:40 PM</span><span className="tracking-[0.2px]">6/3/2025</span></div>
      <div className="w-[33px]" />
    </div>
  );
}

function Dialog() {
  return (
    <div className="absolute left-[1220px] top-[801px] z-20 flex h-[199px] w-[448px] flex-col overflow-hidden rounded-[12px] border border-[#a5a5a5] bg-[#efefef] text-black shadow-[0_32px_64px_0_rgba(0,0,0,0.36),0_0_34px_0_rgba(0,0,0,0.16)]">
      <div className="flex h-[42px] items-center justify-between bg-[linear-gradient(90deg,#f4f1f8,#f6eff7_70%,#faecf6)] pl-[3px] pr-[21px]">
        <span className="text-[19.500px] leading-none tracking-[0.1px]">Microsoft Excel</span>
        <svg className="-mt-[3px] h-[16px] w-[16px]" viewBox="0 0 16 16"><path d="M.5 .5l15 15M15.500 .5l-15 15" stroke="#111" strokeWidth="1.500" /></svg>
      </div>
      <div className="mt-[27px] flex h-[52px] items-center pl-[20px]">
        <svg className="h-[50px] w-[50px]" viewBox="0 0 50 50">
          <defs><linearGradient id="warn" x2="0" y2="1"><stop stopColor="#ffe000" /><stop offset="1" stopColor="#ffb300" /></linearGradient></defs>
          <path d="M21 2.500Q25-1.500 29 2.500L49 43Q50.500 49 45 49.300H5Q-.5 49 1 43z" fill="url(#warn)" stroke="#e5a012" strokeWidth=".8" />
          <path d="M25 15.500V32" stroke="#222" strokeWidth="3" strokeLinecap="round" /><circle cx="25" cy="40" r="2.200" fill="#111" />
        </svg>
        <span className="ml-[18px] whitespace-nowrap pt-[2px] text-[18px] leading-none tracking-[0.14px]">Spell check complete. You're good to go!</span>
      </div>
      <div className="ml-[169px] mt-[21px] flex h-[42px] w-[108px] rounded-[3px] border border-[#0078d7] bg-white p-px">
        <div className="flex grow items-center justify-center border border-dotted border-black pt-px text-[18px] leading-none">OK</div>
      </div>
    </div>
  );
}

export default function App() {
  return (
    <div className="relative flex h-[1800px] w-[2880px] flex-col overflow-hidden bg-white font-['Open_Sans','Noto_Sans',sans-serif]">
      <HeaderArt />
      <TitleBar />
      <TabBar />
      <Ribbon />
      <FormulaBar />
      <div className="flex h-[1350px]">
        <Grid />
        <div className="flex w-[34px] flex-col pl-[2px] pt-px">
          <ScrollArrow className="h-[29px] w-[29px]" d="M0 10h14L7 3z" />
          <div className="h-[1257px] w-[29px] border border-[#ababab] bg-white" />
          <div className="w-[29px] grow bg-[#f0f0f0]" />
          <ScrollArrow className="h-[29px] w-[29px]" d="M0 4h14L7 11z" />
        </div>
      </div>
      <SheetBar />
      <StatusBar />
      <Taskbar />
      <Dialog />
    </div>
  );
}
